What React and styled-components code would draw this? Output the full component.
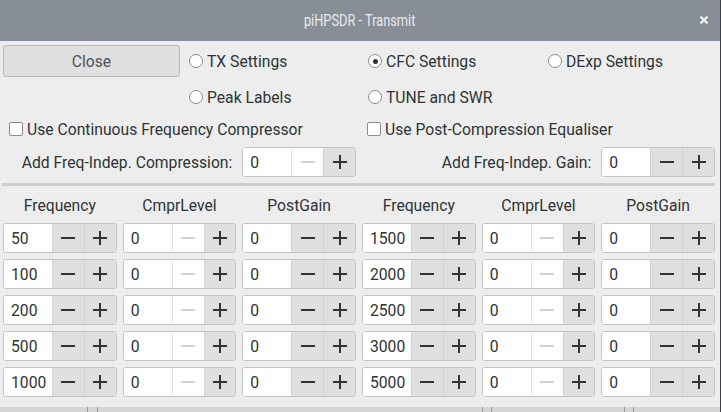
import React from 'react';
import styled, { createGlobalStyle } from 'styled-components';

const Global = createGlobalStyle`
  html, body { margin: 0; padding: 0; }
  body {
    width: 721px;
    height: 412px;
    overflow: hidden;
    background: #ededed;
    font-family: Roboto, "Noto Sans", sans-serif;
    font-size: 15.7px;
    color: #2e3436;
  }
`;

const Window = styled.div`
  width: 720px;
  height: 412px;
  display: flex;
  flex-direction: column;
  border-right: 1px solid #3c4043;
  background: #ededed;
`;

const TitleBar = styled.div`
  height: 41px;
  flex: none;
  background: #878e97;
  display: flex;
  align-items: center;
  justify-content: center;
  position: relative;
  color: #e9eaec;
`;

const Title = styled.span`
  font-size: 16px;
  display: inline-block;
  transform: scaleX(0.8);
`;

const CloseX = styled.span`
  position: absolute;
  right: 10px;
  top: 14px;
  display: flex;
`;

const Body = styled.div`
  flex: 1;
  display: flex;
  flex-direction: column;
  padding: 4px 5px 0 3px;
`;

const TopGrid = styled.div`
  display: grid;
  grid-template-columns: 186px 179px 180px 1fr;
  grid-template-rows: 32px 40px;
  align-items: center;
`;

const Button = styled.button`
  width: 177px;
  height: 32px;
  font: inherit;
  color: #4f5457;
  background: #e0e0e0;
  border: 1px solid #b8b8b8;
  border-radius: 3px;
  padding: 0;
`;

const Choice = styled.label`
  display: flex;
  align-items: center;
  gap: 4px;
  padding-left: ${p => p.$indent || 0}px;
`;

const RadioCircle = styled.span`
  width: 12px;
  height: 12px;
  border-radius: 50%;
  border: 1px solid #8a8d8e;
  background: #fff;
  display: flex;
  align-items: center;
  justify-content: center;
  &::after {
    content: '';
    width: 5px;
    height: 5px;
    border-radius: 50%;
    background: ${p => (p.$on ? '#2e3436' : 'transparent')};
  }
`;

const CheckBox = styled.span`
  width: 12px;
  height: 12px;
  border: 1px solid #8a8d8e;
  border-radius: 2px;
  background: #fff;
`;

const Grid = styled.div`
  display: grid;
  grid-template-columns: repeat(6, 1fr);
  column-gap: 6px;
  align-items: center;
  height: ${p => p.$h}px;
  margin-top: ${p => p.$mt || 0}px;
`;

const Half = styled.div`
  grid-column: ${p => p.$col};
  padding-left: ${p => p.$pl || 0}px;
`;

const RightLabel = styled.div`
  grid-column: ${p => p.$col};
  justify-self: end;
  padding-right: 4px;
`;

const Separator = styled.div`
  height: 3px;
  margin: 6px 0 0 -1px;
  background: #cdcdcd;
  flex: none;
`;

const Header = styled.div`
  text-align: center;
  padding-top: 1px;
`;

const Rows = styled.div`
  display: grid;
  grid-template-columns: repeat(6, 1fr);
  grid-auto-rows: 30px;
  gap: 6px;
`;

const SpinBox = styled.div`
  display: flex;
  height: 30px;
  box-sizing: border-box;
  border: 1px solid #c3c3c3;
  border-radius: 3px;
  overflow: hidden;
  background: #fff;
`;

const Entry = styled.div`
  width: 48px;
  flex: none;
  box-sizing: border-box;
  padding-left: 7px;
  display: flex;
  align-items: center;
  background: #fff;
`;

const Step = styled.div`
  flex: 1;
  display: flex;
  align-items: center;
  justify-content: center;
  background: ${p => (p.$off ? '#fff' : '#dfdfdf')};
  border-left: 1px solid ${p => (p.$off ? '#e6e6e6' : '#d2d2d2')};
  color: ${p => (p.$off ? '#d4d4d4' : '#2e3436')};
`;

const BottomStrip = styled.div`
  margin-top: auto;
  height: 5px;
  background: #d4d4d4;
  margin-left: -3px;
  margin-right: -5px;
  display: flex;
`;

const Tick = styled.span`
  width: 1px;
  height: 5px;
  background: #9a9a9a;
  margin-left: ${p => p.$ml}px;
`;

const MinusIcon = () => (
  <svg width="16" height="16" viewBox="0 0 16 16">
    <rect x="1" y="7" width="14" height="2" fill="currentColor" />
  </svg>
);

const PlusIcon = () => (
  <svg width="16" height="16" viewBox="0 0 16 16">
    <rect x="1" y="7" width="14" height="2" fill="currentColor" />
    <rect x="7" y="1" width="2" height="14" fill="currentColor" />
  </svg>
);

const Spin = ({ value, minOff }) => (
  <SpinBox>
    <Entry>{value}</Entry>
    <Step $off={minOff}><MinusIcon /></Step>
    <Step><PlusIcon /></Step>
  </SpinBox>
);

const Radio = ({ on, children }) => (
  <Choice>
    <RadioCircle $on={on} />
    {children}
  </Choice>
);

const headers = ['Frequency', 'CmprLevel', 'PostGain', 'Frequency', 'CmprLevel', 'PostGain'];
const lowFreq = [50, 100, 200, 500, 1000];
const highFreq = [1500, 2000, 2500, 3000, 5000];

export default function App() {
  return (
    <Window>
      <Global />
      <TitleBar>
        <Title>piHPSDR - Transmit</Title>
        <CloseX>
          <svg width="12" height="12" viewBox="0 0 12 12">
            <path d="M2.5 2.5 L9.5 9.5 M9.5 2.5 L2.5 9.5" stroke="#f4f4f4" strokeWidth="2.2" />
          </svg>
        </CloseX>
      </TitleBar>
      <Body>
        <TopGrid>
          <Button>Close</Button>
          <Radio>TX Settings</Radio>
          <Radio on>CFC Settings</Radio>
          <Radio>DExp Settings</Radio>
          <span />
          <Radio>Peak Labels</Radio>
          <Radio>TUNE and SWR</Radio>
        </TopGrid>
        <Grid $h={24}>
          <Half $col="1 / 4" $pl={6}>
            <Choice><CheckBox />Use Continuous Frequency Compressor</Choice>
          </Half>
          <Half $col="4 / 7" $pl={5}>
            <Choice><CheckBox />Use Post-Compression Equaliser</Choice>
          </Half>
        </Grid>
        <Grid $h={30} $mt={6}>
          <RightLabel $col="1 / 3">Add Freq-Indep. Compression:</RightLabel>
          <Spin value="0" minOff />
          <RightLabel $col="4 / 6">Add Freq-Indep. Gain:</RightLabel>
          <Spin value="0" />
        </Grid>
        <Separator />
        <Grid $h={37}>
          {headers.map((h, i) => <Header key={i}>{h}</Header>)}
        </Grid>
        <Rows>
          {lowFreq.map((f, i) => (
            <React.Fragment key={f}>
              <Spin value={f} />
              <Spin value="0" minOff />
              <Spin value="0" />
              <Spin value={highFreq[i]} />
              <Spin value="0" minOff />
              <Spin value="0" />
            </React.Fragment>
          ))}
        </Rows>
        <BottomStrip>
          <Tick $ml={87} />
          <Tick $ml={9} />
          <Tick $ml={384} />
          <Tick $ml={8} />
          <Tick $ml={132} />
          <Tick $ml={8} />
        </BottomStrip>
      </Body>
    </Window>
  );
}
